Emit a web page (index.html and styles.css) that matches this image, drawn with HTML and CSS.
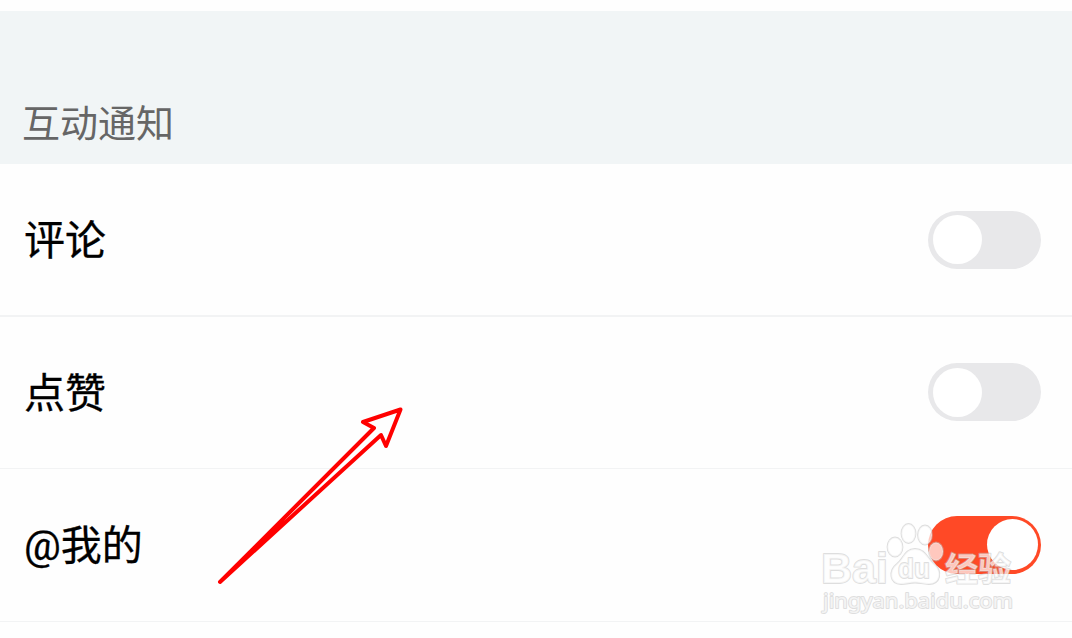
FILE: index.html
```html
<!DOCTYPE html>
<html lang="zh-CN">
<head>
    <meta charset="UTF-8">
    <title>互动通知</title>
    <link rel="stylesheet" href="styles.css">
</head>
<body>
    <div class="page">
        <h3 class="section-title">互动通知</h3>
        <div class="row first">
            <span class="label">评论</span>
            <div class="switch"><div class="knob"></div></div>
        </div>
        <div class="row">
            <span class="label">点赞</span>
            <div class="switch"><div class="knob"></div></div>
        </div>
        <div class="row">
            <span class="label">@我的</span>
            <div class="switch on"><div class="knob"></div></div>
        </div>

        <svg class="arrow" width="200" height="190" viewBox="210 400 200 190">
            <path d="M220 582 L374 428 L363 422 L400.500 409.500 L386 446 L381 435 Z"/>
        </svg>

        <svg class="watermark" width="210" height="105" viewBox="815 515 210 105">
            <text class="mark-logo" x="821" y="583" font-size="43" textLength="67" lengthAdjust="spacingAndGlyphs">Bai</text>
            <ellipse cx="895" cy="547" rx="7.500" ry="9.500"/>
            <ellipse cx="908.500" cy="533.500" rx="7" ry="9.500"/>
            <ellipse cx="925" cy="535" rx="7" ry="9.500"/>
            <ellipse cx="936" cy="551.500" rx="7" ry="9"/>
            <path d="M915 549 C925 549 927 558 934 564 C943 572 940 584 929 584 C922 584 921 582.500 915 582.500 C909 582.500 907 584 901 584 C890 584 888 571 897 564 C904 558 905 549 915 549 Z"/>
            <text class="mark-logo" x="898" y="578" font-size="27" textLength="32" lengthAdjust="spacingAndGlyphs">du</text>
            <text class="mark-cn" x="945" y="580.500" font-size="33">经验</text>
            <text class="mark-url" x="823" y="608" font-size="20" textLength="190" lengthAdjust="spacingAndGlyphs">jingyan.baidu.com</text>
        </svg>
    </div>
</body>
</html>
```
FILE: styles.css
```css
body {
    margin: 0;
    background-color: #fefefe;
    font-family: Roboto, "Noto Sans CJK SC", sans-serif;
}

.page {
    position: relative;
    height: 638px;
    padding-top: 11px;
    box-sizing: border-box;
    overflow: hidden;
}

.section-title {
    display: flex;
    align-items: flex-end;
    height: 153px;
    margin: 0;
    padding: 0 22px 12px;
    box-sizing: border-box;
    background-color: #f1f5f6;
    color: #666;
    font-size: 38px;
    font-weight: 400;
    line-height: 56px;
}

.row {
    display: flex;
    align-items: center;
    justify-content: space-between;
    height: 152.5px;
    padding: 0 31px 0 24px;
    box-sizing: border-box;
    border-bottom: 1px solid #f2f3f4;
}

.row.first {
    padding-top: 1px;
    border-bottom-width: 2px;
}

.label {
    padding-top: 3px;
    color: #000;
    font-size: 41px;
    line-height: 60px;
    -webkit-text-stroke: 0.3px #000;
}

.switch {
    display: flex;
    align-items: center;
    width: 113px;
    height: 58px;
    padding: 0 5px;
    box-sizing: border-box;
    border-radius: 29px;
    background-color: #e8e8ea;
}

.knob {
    width: 49px;
    height: 49px;
    border-radius: 50%;
    background-color: #fff;
}

.switch.on {
    justify-content: flex-end;
    padding: 0 3px;
    background-color: #ff4926;
}

.switch.on .knob {
    width: 51px;
    height: 51px;
}

.arrow {
    position: absolute;
    left: 210px;
    top: 400px;
    fill: none;
    stroke: #f00;
    stroke-width: 4;
    stroke-linejoin: round;
}

.watermark {
    position: absolute;
    left: 815px;
    top: 515px;
    fill: rgba(255, 255, 255, 0.7);
    stroke: rgba(190, 190, 190, 0.5);
    stroke-width: 1.8;
    stroke-linejoin: round;
    paint-order: stroke;
}

.mark-logo {
    font-family: "Liberation Sans", sans-serif;
    font-weight: bold;
}

.mark-cn {
    font-family: "Noto Sans CJK SC", sans-serif;
    font-weight: bold;
}

.mark-url {
    font-family: "Noto Sans", sans-serif;
}
```
